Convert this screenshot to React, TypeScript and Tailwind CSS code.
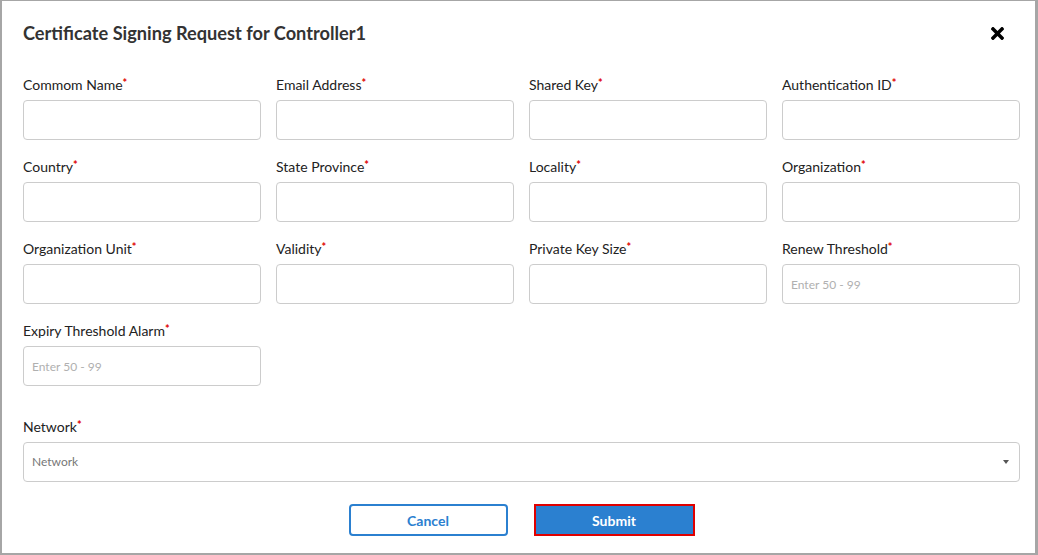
import { FaTimes } from "react-icons/fa";

// ─── Fields ───────────────────────────────────────────────────────────────────
const FIELDS: { label: string; placeholder?: string }[] = [
  { label: "Commom Name" },
  { label: "Email Address" },
  { label: "Shared Key" },
  { label: "Authentication ID" },
  { label: "Country" },
  { label: "State Province" },
  { label: "Locality" },
  { label: "Organization" },
  { label: "Organization Unit" },
  { label: "Validity" },
  { label: "Private Key Size" },
  { label: "Renew Threshold", placeholder: "Enter 50 - 99" },
  { label: "Expiry Threshold Alarm", placeholder: "Enter 50 - 99" },
];

function Label({ text }: { text: string }) {
  return (
    <label className="block h-5 pt-[1px] text-[14px] leading-5 text-[#222]">
      {text}
      <span className="relative -top-[3px] text-[11px] font-bold text-[#e00000]">*</span>
    </label>
  );
}

// ─── Component ────────────────────────────────────────────────────────────────
export default function App() {
  return (
    <div
      className="w-[1038px] h-[555px] bg-white border-t border-l-2 border-r-[3px] border-b-2 border-[#a6a6a6] overflow-hidden"
      style={{ fontFamily: "Lato, 'Open Sans', Arial, sans-serif" }}
    >
      <div className="pl-[21px] pr-[15px]">
        {/* Header */}
        <div className="flex items-center justify-between h-[24px] mt-[20px]">
          <h2 className="text-[18.2px] font-bold text-[#333] leading-6">
            Certificate Signing Request for Controller1
          </h2>
          <button className="mr-[13px] text-black">
            <FaTimes className="w-[19px] h-[19px]" />
          </button>
        </div>

        {/* Grid */}
        <div className="grid grid-cols-4 gap-x-[15px] gap-y-[16px] mt-[29px] w-[997px]">
          {FIELDS.map((f) => (
            <div key={f.label}>
              <Label text={f.label} />
              <input
                placeholder={f.placeholder}
                className="mt-[6px] w-full h-[40px] rounded-[4px] border border-[#cccccc] px-2 text-[12px] text-[#333] placeholder:text-[#b0b0b0] outline-none"
              />
            </div>
          ))}
        </div>

        {/* Network */}
        <div className="mt-[30px] w-[997px]">
          <Label text="Network" />
          <div className="mt-[6px] flex items-center justify-between h-[40px] rounded-[4px] border border-[#cccccc] pl-2 pr-[10px]">
            <span className="text-[12px] text-[#777]">Network</span>
            <span className="w-0 h-0 border-l-[3px] border-r-[3px] border-t-[4px] border-l-transparent border-r-transparent border-t-[#555]" />
          </div>
        </div>

        {/* Actions */}
        <div className="mt-[22px] w-[997px] flex justify-center gap-[26px]">
          <button className="w-[159px] h-[32px] rounded-[4px] border-2 border-[#2b80d0] text-[14px] font-bold text-[#2b80d0] bg-white">
            Cancel
          </button>
          <button className="w-[161px] h-[32px] border-2 border-[#e00000] bg-[#2b80d0] text-[14px] font-bold text-white">
            Submit
          </button>
        </div>
      </div>
    </div>
  );
}
